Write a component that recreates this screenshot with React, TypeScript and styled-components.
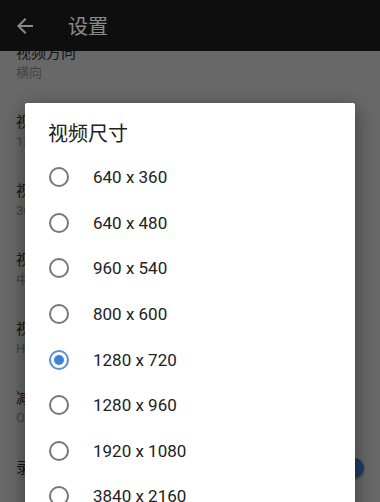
import React, { useState } from "react";
import styled, { createGlobalStyle } from "styled-components";

const GlobalStyle = createGlobalStyle`
  html, body {
    margin: 0;
    padding: 0;
    overflow: hidden;
    background: #000;
  }
  body {
    font-family: Roboto, "Noto Sans CJK SC", sans-serif;
  }
`;

const Screen = styled.div`
  position: relative;
  width: 380px;
  height: 502px;
  overflow: hidden;
  display: flex;
  flex-direction: column;
  background: #aeaeae;
`;

const AppBar = styled.header`
  height: 51px;
  flex-shrink: 0;
  display: flex;
  align-items: center;
  padding-left: 13px;
  background: #181818;
`;

const BackIcon = styled.svg`
  width: 24px;
  height: 24px;
  fill: #e6e6e6;
  flex-shrink: 0;
`;

const BarTitle = styled.h1`
  margin: 0 0 0 31px;
  font-size: 20px;
  font-weight: 400;
  color: #e6e6e6;
`;

const ListViewport = styled.div`
  flex: 1;
  overflow: hidden;
`;

const List = styled.div`
  margin-top: -22.5px;
`;

const SettingRow = styled.div<{ $single?: boolean }>`
  display: flex;
  align-items: center;
  justify-content: space-between;
  padding: ${({ $single }) => ($single ? "15.5px 18px 15.5px 16px" : "14.5px 16px")};
`;

const SettingText = styled.div`
  display: flex;
  flex-direction: column;
`;

const SettingTitle = styled.span`
  font-size: 15px;
  line-height: 20px;
  color: #252525;
`;

const SettingValue = styled.span`
  font-size: 13px;
  line-height: 20px;
  color: #717171;
`;

const SwitchTrack = styled.span`
  position: relative;
  width: 34px;
  height: 14px;
  border-radius: 7px;
  background: #8fb0dc;
`;

const SwitchThumb = styled.span`
  position: absolute;
  right: -2px;
  top: -3px;
  width: 20px;
  height: 20px;
  border-radius: 50%;
  background: #3464aa;
  box-shadow: 0 1px 3px rgba(0, 0, 0, 0.4);
`;

const Backdrop = styled.div`
  position: absolute;
  inset: 0;
  display: flex;
  justify-content: center;
  align-items: flex-start;
  padding-top: 103px;
  background: rgba(0, 0, 0, 0.4);
`;

const Dialog = styled.div`
  width: 330px;
  flex-shrink: 0;
  padding-top: 17px;
  background: #ffffff;
  border-radius: 2px;
  box-shadow: 0 6px 20px rgba(0, 0, 0, 0.45);
`;

const DialogTitle = styled.h2`
  margin: 0 0 6.5px;
  padding: 0 23px;
  font-size: 20px;
  line-height: 28px;
  font-weight: 400;
  color: #212121;
`;

const Option = styled.label`
  display: flex;
  align-items: center;
  gap: 24px;
  height: 45.6px;
  padding: 0 24px;
  font-size: 17px;
  color: #222222;
  cursor: pointer;
`;

const Radio = styled.span<{ $checked: boolean }>`
  box-sizing: border-box;
  display: flex;
  align-items: center;
  justify-content: center;
  width: 20px;
  height: 20px;
  border-radius: 50%;
  border: 2px solid ${({ $checked }) => ($checked ? "#5b8fd6" : "#777777")};

  &::after {
    content: "";
    width: 10px;
    height: 10px;
    border-radius: 50%;
    background: #3e80d6;
    display: ${({ $checked }) => ($checked ? "block" : "none")};
  }
`;

const settings = [
  { title: "视频方向", value: "横向" },
  { title: "视频尺寸", value: "1280 x 720" },
  { title: "视频帧率", value: "30 fps" },
  { title: "视频质量", value: "中" },
  { title: "视频编码", value: "H.264" },
  { title: "减少噪点", value: "OFF" },
];

const sizes = [
  "640 x 360",
  "640 x 480",
  "960 x 540",
  "800 x 600",
  "1280 x 720",
  "1280 x 960",
  "1920 x 1080",
  "3840 x 2160",
];

export default function App() {
  const [size, setSize] = useState("1280 x 720");

  return (
    <>
      <GlobalStyle />
      <Screen>
        <AppBar>
          <BackIcon viewBox="0 0 24 24">
            <path d="M20 11H7.83l5.59-5.59L12 4l-8 8 8 8 1.41-1.41L7.83 13H20v-2z" />
          </BackIcon>
          <BarTitle>设置</BarTitle>
        </AppBar>
        <ListViewport>
          <List>
            {settings.map((s) => (
              <SettingRow key={s.title}>
                <SettingText>
                  <SettingTitle>{s.title}</SettingTitle>
                  <SettingValue>{s.value}</SettingValue>
                </SettingText>
              </SettingRow>
            ))}
            <SettingRow $single>
              <SettingTitle>录制音频</SettingTitle>
              <SwitchTrack>
                <SwitchThumb />
              </SwitchTrack>
            </SettingRow>
          </List>
        </ListViewport>

        <Backdrop>
          <Dialog>
            <DialogTitle>视频尺寸</DialogTitle>
            {sizes.map((s) => (
              <Option key={s} onClick={() => setSize(s)}>
                <Radio $checked={s === size} />
                {s}
              </Option>
            ))}
          </Dialog>
        </Backdrop>
      </Screen>
    </>
  );
}
